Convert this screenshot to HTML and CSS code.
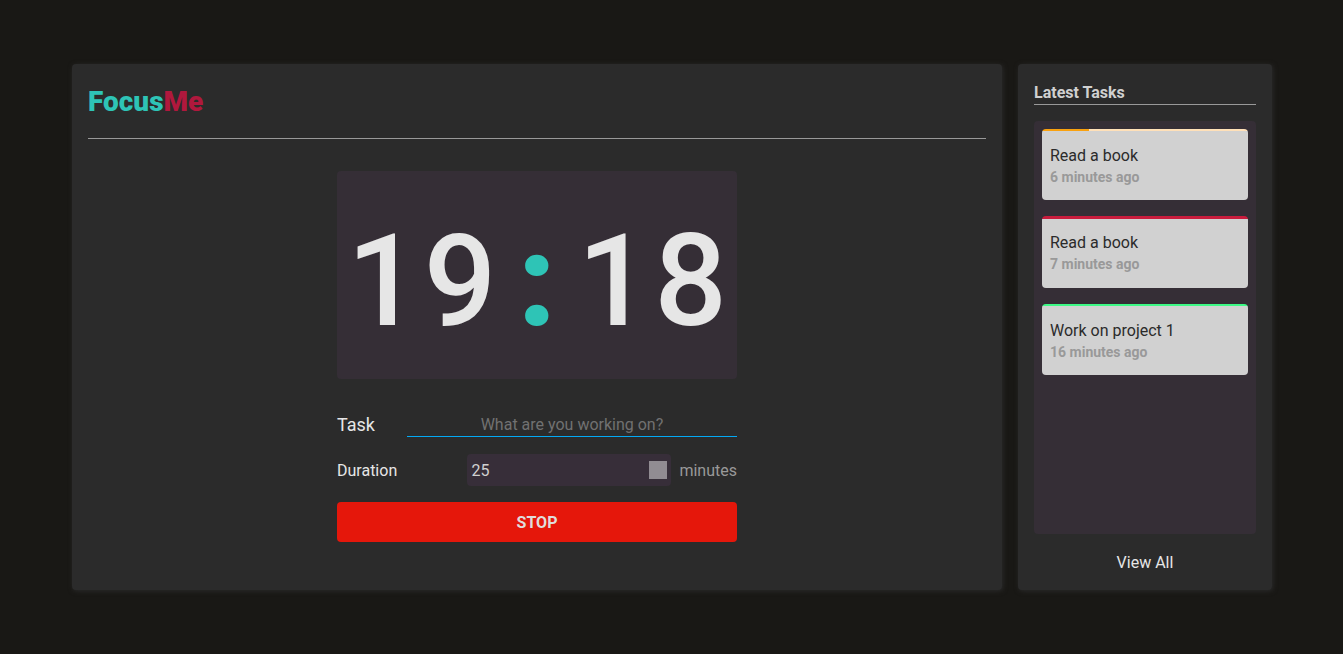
FILE: index.html
```html
<!DOCTYPE html>
<html lang="en">
<head>
<meta charset="utf-8">
<title>FocusMe</title>
<link rel="stylesheet" href="styles.css">
</head>
<body>
<div class="layout">
  <main class="panel main">
    <header class="header">
      <h1 class="logo">Focus<span class="logo-accent">Me</span></h1>
    </header>
    <form class="timer">
      <div class="clock" role="timer">
        <span>1</span><span>9</span><span class="colon">:</span><span>1</span><span>8</span>
      </div>
      <div class="field task-field">
        <label class="task-label" for="task">Task</label>
        <input class="task-input" id="task" type="text" placeholder="What are you working on?">
      </div>
      <div class="field duration-field">
        <label class="duration-label" for="duration">Duration</label>
        <div class="duration-box">
          <input class="duration-input" id="duration" type="text" inputmode="numeric" value="25">
          <button class="stepper" type="button" aria-label="Change duration"></button>
        </div>
        <span class="unit">minutes</span>
      </div>
      <button class="stop" type="button">STOP</button>
    </form>
  </main>
  <aside class="panel sidebar">
    <h2 class="sidebar-title">Latest Tasks</h2>
    <ul class="tasks">
      <li class="task task-partial">
        <span class="task-name">Read a book</span>
        <span class="task-time">6 minutes ago</span>
      </li>
      <li class="task task-stopped">
        <span class="task-name">Read a book</span>
        <span class="task-time">7 minutes ago</span>
      </li>
      <li class="task task-done">
        <span class="task-name">Work on project 1</span>
        <span class="task-time">16 minutes ago</span>
      </li>
    </ul>
    <a class="view-all" href="#all">View All</a>
  </aside>
</div>
</body>
</html>
```
FILE: styles.css
```css
* {
  box-sizing: border-box;
}

body {
  margin: 0;
  background: #191815;
  color: #e6e6e6;
  font: 400 16px/24px Roboto, sans-serif;
}

input,
button {
  font: inherit;
}

.layout {
  display: flex;
  gap: 16px;
  max-width: 1343px;
  min-height: 100vh;
  margin: 0 auto;
  padding: 64px 71px 64px 72px;
}

.panel {
  padding: 16px;
  border-radius: 4px;
  background: #2b2b2b;
  box-shadow: 1px 1px 5px #2b2b2b;
}

.main {
  flex: 1;
}

.header {
  padding-bottom: 14px;
  border-bottom: 1px solid #999;
}

.logo {
  margin: 0;
  color: #2ec4b6;
  font-size: 28px;
  line-height: 44px;
  font-weight: 900;
}

.logo-accent {
  color: #b0183d;
}

.timer {
  max-width: 400px;
  margin: 32px auto 0;
}

.clock {
  display: grid;
  grid-template-columns: repeat(5, 1fr);
  padding: 14px 8px 2px;
  border-radius: 4px;
  background: #352e36;
  font-size: 128px;
  line-height: 192px;
  font-weight: 500;
  text-align: center;
}

.colon {
  color: #2ec4b6;
  font-weight: 900;
}

.field {
  display: flex;
  align-items: center;
}

.task-field {
  gap: 32px;
  margin-top: 32px;
}

.task-label {
  padding-top: 2px;
  font-size: 18px;
}

.task-input {
  flex: 1;
  min-width: 0;
  height: 26px;
  padding: 2px 0 0;
  border: 0;
  border-bottom: 1px solid #03a9f4;
  background: none;
  color: #e6e6e6;
  text-align: center;
}

.task-input::placeholder {
  color: #717171;
}

.duration-field {
  gap: 8px;
  margin-top: 17px;
}

.duration-label {
  flex: 1;
  padding-top: 2px;
}

.duration-box {
  display: flex;
  align-items: center;
  width: 204px;
  height: 32px;
  padding: 0 4px;
  border-radius: 4px;
  background: #372e39;
}

.duration-input {
  flex: 1;
  min-width: 0;
  padding: 2px 0 0;
  border: 0;
  background: none;
  color: #d0d0d0;
}

.stepper {
  width: 18px;
  height: 18px;
  padding: 0;
  border: 0;
  background: #918c92;
}

.unit {
  padding-top: 2px;
  color: #999;
}

.stop {
  width: 100%;
  height: 40px;
  margin-top: 16px;
  padding: 2px 0 0;
  border: 0;
  border-radius: 4px;
  background: #e5170b;
  color: #e0dcdc;
  font-weight: 700;
}

.sidebar {
  display: flex;
  flex-direction: column;
  width: 254px;
}

.sidebar-title {
  margin: 0 0 16px;
  padding-top: 1px;
  border-bottom: 1px solid #999;
  color: #d0d0d0;
  font-size: 16px;
  line-height: 23px;
  font-weight: 700;
}

.tasks {
  flex: 1;
  display: flex;
  flex-direction: column;
  gap: 16px;
  margin: 0;
  padding: 8px;
  border-radius: 4px;
  background: #352e36;
  list-style: none;
}

.task {
  display: flex;
  flex-direction: column;
  padding: 15px 8px 14px;
  border-radius: 4px;
  background: linear-gradient(#ff9800, #ff9800) 0 0 / 100% 2px no-repeat #d1d1d1;
}

.task-partial {
  background-image: linear-gradient(90deg, #f9a10f 23%, #ffe0b8 23%);
}

.task-stopped {
  padding-bottom: 15px;
  background-image: linear-gradient(#c91c3d, #c91c3d);
  background-size: 100% 3px;
}

.task-done {
  background-image: linear-gradient(#3dfa86, #3dfa86);
}

.task-name {
  color: #2b2b2b;
}

.task-time {
  color: #999;
  font-size: 14px;
  line-height: 18px;
  font-weight: 700;
}

.view-all {
  margin: 16px auto 0;
  padding-top: 1px;
  color: #e6e6e6;
  line-height: 23px;
  text-decoration: none;
}
```
